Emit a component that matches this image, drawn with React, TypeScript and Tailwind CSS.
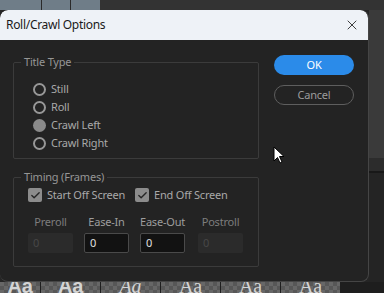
import { Check, X } from 'lucide-react';

const thumbs = [
  { w: 'w-[40px]', cls: 'font-bold font-[Liberation_Sans,sans-serif]' },
  { w: 'w-[59px]', cls: 'font-bold font-[Liberation_Sans,sans-serif]' },
  { w: 'w-[59px]', cls: 'italic font-[Liberation_Serif,serif]' },
  { w: 'w-[59px]', cls: 'font-[Liberation_Serif,serif]' },
  { w: 'w-[59px]', cls: 'font-[Liberation_Serif,serif]' },
  { w: 'w-[59px]', cls: 'font-[Liberation_Serif,serif]' },
];

function Radio({ label, checked }: { label: string; checked?: boolean }) {
  return (
    <div className="flex items-center h-[18px] gap-[5px]">
      {checked ? (
        <span className="w-[13px] h-[13px] rounded-full bg-[#8a8a8a]" />
      ) : (
        <span className="w-[13px] h-[13px] rounded-full border-2 border-[#979797]" />
      )}
      <span className="text-[#a9a9a9]">{label}</span>
    </div>
  );
}

function CheckBox({ label }: { label: string }) {
  return (
    <div className="flex items-center gap-[5px]">
      <span className="w-[14px] h-[14px] rounded-[2px] bg-[#8c8c8c] flex items-center justify-center">
        <Check size={11} strokeWidth={3} color="#262626" />
      </span>
      <span className="text-[#a9a9a9]">{label}</span>
    </div>
  );
}

function NumField({ label, enabled, extra }: { label: string; enabled?: boolean; extra?: string }) {
  return (
    <div className={`flex flex-col items-center w-[45px] ${extra ?? ''}`}>
      <span className={`whitespace-nowrap ${enabled ? 'text-[#9d9d9d]' : 'text-[#7d7d7d]'}`}>{label}</span>
      <div
        className={`mt-[3px] w-[45px] h-[20px] rounded-[2px] px-[5px] flex items-center ${
          enabled ? 'bg-[#121212] border border-[#4a4a4a] text-[#e0e0e0]' : 'bg-[#2b2b2b] text-[#474747]'
        }`}
      >
        0
      </div>
    </div>
  );
}

export default function App() {
  return (
    <div className="relative w-[384px] h-[293px] overflow-hidden bg-[#252525] font-[Noto_Sans,sans-serif] text-[11px] tracking-[-0.2px]">
      {/* background app */}
      <div className="flex flex-col h-full">
        <div className="flex h-[10px]">
          <div className="w-[41px] bg-[#6f7d88]" />
          <div className="w-[1px] bg-[#2a2a2a]" />
          <div className="w-[28px] bg-[#6f7d88]" />
          <div className="w-[1px] bg-[#2a2a2a]" />
          <div className="w-[29px] bg-[#6f7d88]" />
          <div className="flex-1 bg-[#333333]" />
        </div>
        <div className="flex flex-1">
          <div className="flex-1" />
          <div className="w-[15px] flex flex-col">
            <div className="h-[148px] bg-[#3a3a3a]" />
            <div className="h-[13px] bg-[#2c2c2c]" />
            <div className="h-[2px] bg-[#181818]" />
            <div className="flex-1 bg-[#242424]" />
          </div>
        </div>
        <div className="flex h-[11px] bg-[#1e1e1e]">
          {thumbs.map((t, i) => (
            <div
              key={i}
              className={`${t.w} mr-[1px] overflow-hidden bg-[repeating-conic-gradient(#575757_0_25%,#676767_0_50%)] bg-size-[8px_8px] flex justify-center`}
            >
              <span className={`text-[20px] leading-none -mt-[6px] text-[#d4d4d4] ${t.cls}`}>Aa</span>
            </div>
          ))}
        </div>
      </div>

      {/* dialog */}
      <div className="absolute left-0 top-[10px] w-[369px] h-[272px] rounded-lg border border-[#454545] border-t-0 border-l-0 bg-[#232323] flex flex-col overflow-hidden">
        <div className="h-[30px] bg-[#eef2f7] flex items-center justify-between pl-[6px] pr-[8px] rounded-t-lg">
          <span className="text-[12px] text-[#1a1a1a] tracking-[-0.3px]">Roll/Crawl Options</span>
          <X size={16} strokeWidth={1.3} color="#222" />
        </div>
        <div className="flex flex-1 pl-[13px]">
          <div className="w-[246px] pt-[22px] flex flex-col">
            <div className="relative h-[97px] border border-[#3b3b3b] rounded-[2px] pl-[19px] pt-[17px]">
              <span className="absolute left-[7px] -top-[9px] px-[3px] bg-[#232323] text-[#969696] leading-[16px]">
                Title Type
              </span>
              <Radio label="Still" />
              <Radio label="Roll" />
              <Radio label="Crawl Left" checked />
              <Radio label="Crawl Right" />
            </div>
            <div className="relative mt-[18px] h-[90px] border border-[#3b3b3b] rounded-[2px] pl-[14px] pt-[9px]">
              <span className="absolute left-[7px] -top-[9px] px-[3px] bg-[#232323] text-[#969696] leading-[16px]">
                Timing (Frames)
              </span>
              <div className="flex">
                <div className="w-[107px]">
                  <CheckBox label="Start Off Screen" />
                </div>
                <CheckBox label="End Off Screen" />
              </div>
              <div className="flex gap-[11px] mt-[10px]">
                <NumField label="Preroll" />
                <NumField label="Ease-In" enabled />
                <NumField label="Ease-Out" enabled />
                <NumField label="Postroll" extra="ml-[2px]" />
              </div>
            </div>
          </div>
          <div className="ml-[15px] pt-[15px] flex flex-col gap-[10px]">
            <div className="w-[80px] h-[20px] rounded-full bg-[#2b8be9] text-white flex items-center justify-center">
              OK
            </div>
            <div className="w-[80px] h-[20px] rounded-full border-[1.5px] border-[#5e5e5e] text-[#9c9c9c] flex items-center justify-center">
              Cancel
            </div>
          </div>
        </div>
      </div>

      {/* mouse cursor */}
      <svg className="absolute left-[273px] top-[146px]" width="13" height="19" viewBox="0 0 13 19">
        <path d="M1 1 L1 15 L4.5 11.5 L7 17 L9 16 L6.5 10.5 L11 10.5 Z" fill="#fff" stroke="#000" strokeWidth="1" />
      </svg>
    </div>
  );
}
